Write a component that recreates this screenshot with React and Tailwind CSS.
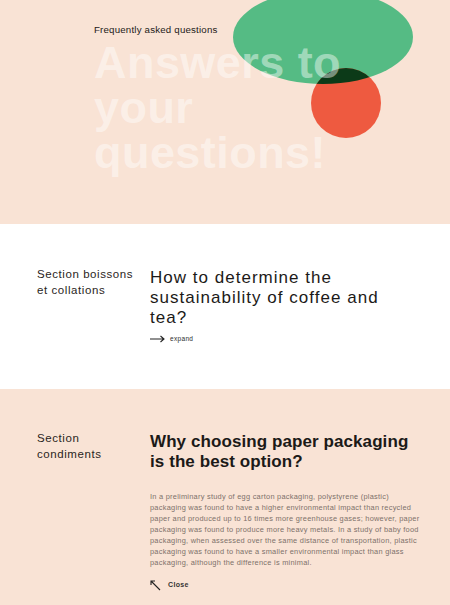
import React from "react";

const Shapes = () => (
  <svg className="absolute left-[232px] top-[-12px]" width="182" height="152" viewBox="0 0 182 152">
    <defs>
      <clipPath id="blobClip">
        <ellipse cx="91" cy="49" rx="90" ry="47" />
      </clipPath>
    </defs>
    <ellipse cx="91" cy="49" rx="90" ry="47" fill="#55bb84" />
    <circle cx="114" cy="115" r="35" fill="#ee5a40" />
    <circle cx="114" cy="115" r="35" fill="#0c3a18" clipPath="url(#blobClip)" />
  </svg>
);

const paragraph = [
  "In a preliminary study of egg carton packaging, polystyrene (plastic)",
  "packaging was found to have a higher environmental impact than recycled",
  "paper and produced up to 16 times more greenhouse gases; however, paper",
  "packaging was found to produce more heavy metals. In a study of baby food",
  "packaging, when assessed over the same distance of transportation, plastic",
  "packaging was found to have a smaller environmental impact than glass",
  "packaging, although the difference is minimal.",
];

const App = () => {
  return (
    <div className="w-[450px] min-h-[605px] font-['Liberation_Sans',Arial,sans-serif] text-[#1c1a18]">
      {/* Hero */}
      <div className="relative h-[224px] overflow-hidden bg-[#f9e3d5]">
        <Shapes />
        <div className="relative pl-[94px] pt-[23px]">
          <p className="text-[9.7px] font-medium tracking-[0.02em]">Frequently asked questions</p>
          <h1 className="mt-[2px] text-[45px] font-bold leading-[45px] tracking-[0.01em] text-white/45">
            Answers to
            <br />
            your
            <br />
            questions!
          </h1>
        </div>
      </div>

      {/* Question 1 */}
      <div className="flex bg-white pt-[42px] h-[165px]">
        <div className="w-[150px] pl-[37px] shrink-0">
          <p className="text-[11.5px] font-medium leading-[16px] tracking-[0.05em] text-[#2a2522]">
            Section boissons
            <br />
            et collations
          </p>
        </div>
        <div className="w-[250px] pt-[2px]">
          <h2 className="text-[17px] leading-[20px] tracking-[0.06em] text-[#1c1a18]">
            How to determine the sustainability of coffee and tea?
          </h2>
          <div className="mt-[6px] flex items-center gap-[5px]">
            <svg width="15" height="8" viewBox="0 0 15 8" fill="none" stroke="#222" strokeWidth="1.1">
              <path d="M0 4h14M10.5 1l3.5 3-3.5 3" />
            </svg>
            <span className="text-[6.5px] tracking-[0.05em] text-[#2b2b2b]">expand</span>
          </div>
        </div>
      </div>

      {/* Question 2 */}
      <div className="flex bg-[#f9e3d5] pt-[41px] pb-[14px]">
        <div className="w-[150px] pl-[37px] shrink-0">
          <p className="text-[11.5px] font-medium leading-[16px] tracking-[0.05em] text-[#2a2522]">
            Section
            <br />
            condiments
          </p>
        </div>
        <div className="w-[280px] pt-[2px]">
          <h2 className="w-[262px] text-[17px] font-bold leading-[20px] tracking-[0.005em] text-[#1c1a18]">
            Why choosing paper packaging is the best option?
          </h2>
          <p className="mt-[19px] whitespace-nowrap text-[7.4px] leading-[11px] tracking-[0.035em] text-[#7d716a]">
            {paragraph.map((line, i) => (
              <React.Fragment key={i}>
                {line}
                {i < paragraph.length - 1 && <br />}
              </React.Fragment>
            ))}
          </p>
          <div className="mt-[12px] flex items-center gap-[7px]">
            <svg width="11" height="11" viewBox="0 0 11 11" fill="none" stroke="#222" strokeWidth="1.1">
              <path d="M10 10L1 1M1 5V1h4" />
            </svg>
            <span className="text-[7px] font-bold tracking-[0.05em] text-[#333]">Close</span>
          </div>
        </div>
      </div>
    </div>
  );
};

export default App;
